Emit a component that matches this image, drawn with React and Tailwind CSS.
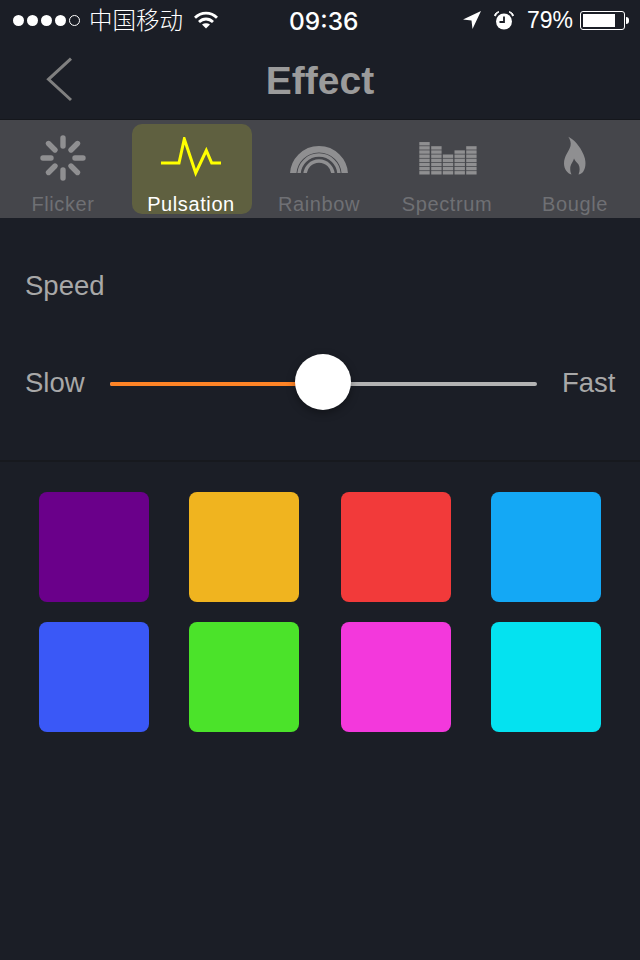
const TABS = ["Flicker", "Pulsation", "Rainbow", "Spectrum", "Bougle"];

const SWATCHES = [
  "bg-[#6a008a]",
  "bg-[#f0b41f]",
  "bg-[#f23a3a]",
  "bg-[#14a8f5]",
  "bg-[#3a58f7]",
  "bg-[#4be32a]",
  "bg-[#f338dc]",
  "bg-[#04e2f0]",
];

const SPECTRUM = [
  { x: 2.3, bars: 8 },
  { x: 14.2, bars: 7 },
  { x: 25.8, bars: 5 },
  { x: 37.5, bars: 6 },
  { x: 49.2, bars: 7 },
];

function SignalDots() {
  return (
    <div className="flex items-center gap-[3px]">
      {[0, 1, 2, 3].map((i) => (
        <div key={i} className="w-[11px] h-[11px] rounded-full bg-white" />
      ))}
      <div className="w-[11px] h-[11px] rounded-full border border-white" />
    </div>
  );
}

function Wifi() {
  return (
    <svg width="24" height="18" viewBox="0 0 24 18" fill="none" stroke="white" strokeWidth="2.8">
      <path d="M1 6.8C7.2 0.6 16.8 0.6 23 6.8" />
      <path d="M5 11C9.2 7 14.8 7 19 11" />
      <path d="M12 17.5L8 13.6C10.4 11.9 13.6 11.9 16 13.6Z" fill="white" stroke="none" />
    </svg>
  );
}

function StatusBar() {
  return (
    <div className="relative h-10 flex items-center justify-between pl-[13px] pr-[11px] text-white">
      <div className="flex items-center">
        <SignalDots />
        <span className="ml-[9px] text-[23.5px] font-light font-['Noto_Sans_CJK_SC',sans-serif]">中国移动</span>
        <div className="ml-[11px]">
          <Wifi />
        </div>
      </div>
      <span className="absolute left-[289px] top-[5px] text-[24.5px] leading-[32px] font-medium font-['Inter',sans-serif]">09:36</span>
      <div className="flex items-center">
        <svg width="18" height="18" viewBox="0 0 18 18" fill="white">
          <path d="M0 8.5L18 0L9.5 18L8.5 9.5Z" />
        </svg>
        <svg className="ml-[13px]" width="20" height="19" viewBox="0 0 20 19">
          <circle cx="10" cy="10.5" r="8" fill="white" />
          <path d="M10 5.5V11H5.5" fill="none" stroke="#1b1e26" strokeWidth="1.8" />
          <path d="M0.5 4.5C1 2.5 3 0.8 5 0.8C3.5 1.8 2 3.2 1.5 5ZM19.5 4.5C19 2.5 17 0.8 15 0.8C16.5 1.8 18 3.2 18.5 5Z" fill="white" stroke="white" strokeWidth="1" />
        </svg>
        <span className="ml-[13px] text-[23px] leading-none font-light">79%</span>
        <div className="ml-[7px] flex items-center">
          <div className="w-[45px] h-[19px] rounded-[3px] border border-white p-[2px]">
            <div className="w-[32px] h-full bg-white" />
          </div>
          <div className="ml-[1px] w-[3px] h-[7px] rounded-r-sm bg-white" />
        </div>
      </div>
    </div>
  );
}

function TabIcon({ name }) {
  if (name === "Flicker") {
    return (
      <svg width="46" height="46" viewBox="0 0 46 46" stroke="#8f8f91" strokeWidth="5.4" strokeLinecap="round">
        <path d="M23 3V11M23 35V43M3 23H11M35 23H43M8.5 8.5L15 15M31 31L37.5 37.5M37.5 8.5L31 15M15 31L8.5 37.5" />
      </svg>
    );
  }
  if (name === "Pulsation") {
    return (
      <svg className="-translate-y-px" width="62" height="40" viewBox="0 0 62 40" fill="none" stroke="#ffff00" strokeWidth="3">
        <path d="M1 26H19L24.3 2L35.7 36L46.3 13.5L51.7 26H61" />
      </svg>
    );
  }
  if (name === "Rainbow") {
    return (
      <svg className="translate-y-[2px]" width="58" height="27" viewBox="0 0 58 27" fill="none" stroke="#8f8f91">
        <circle cx="29" cy="29" r="25.8" strokeWidth="6.4" />
        <circle cx="29" cy="29" r="20" strokeWidth="3.4" />
        <circle cx="29" cy="29" r="14" strokeWidth="3.4" />
      </svg>
    );
  }
  if (name === "Spectrum") {
    return (
      <svg width="60" height="34" viewBox="0 0 60 34" fill="#8f8f91">
        {SPECTRUM.flatMap((col) =>
          Array.from({ length: col.bars }, (_, i) => (
            <rect key={`${col.x}-${i}`} x={col.x} y={33.5 - 3.4 - i * 4.15} width="10.4" height="3.4" />
          ))
        )}
      </svg>
    );
  }
  return (
    <svg className="-translate-y-[2px]" width="24" height="40" viewBox="0 0 24 40" fill="#8f8f91">
      <path d="M5.3 0.7C11 3.5 17 10 20.5 18.5C23 24 23.5 31 20 36C18.5 37.5 17 38.3 15.5 38.5C17 35 17 31 15.5 28.5C14 26.5 12 25 11 22.5C10.5 25.5 8 27.5 7.3 31C7 34 7.5 36.5 8.5 38.5C4.5 37.5 1 33 1 27.5C1 20 6 15.5 7.5 10C8.3 6.5 7 3 5.3 0.7Z" />
    </svg>
  );
}

export default function App() {
  return (
    <div className="w-[640px] h-[960px] overflow-hidden bg-[#1b1e26] font-['Liberation_Sans',sans-serif]">
      <StatusBar />

      {/* Header */}
      <div className="relative h-[80px] flex items-center justify-center border-b border-[#15171c]">
        <svg className="absolute left-[46px] top-[16px]" width="28" height="46" viewBox="0 0 28 46" fill="none" stroke="#808080" strokeWidth="3">
          <path d="M25 2.7L2.5 23.3L25 44" />
        </svg>
        <h1 className="pt-[3px] text-[39px] font-bold text-[#9b9b9b]">Effect</h1>
      </div>

      {/* Effect tabs */}
      <div className="h-[98px] bg-[#45464b] flex ml-[-1px]">
        {TABS.map((tab) => {
          const active = tab === "Pulsation";
          return (
            <div key={tab} className="relative w-[128px] shrink-0 flex flex-col items-center">
              {active && <div className="absolute left-[5px] top-[4px] w-[120px] h-[90px] rounded-[10px] bg-[#5f6040]" />}
              <div className="relative h-[70px] pt-[5px] flex items-center justify-center">
                <TabIcon name={tab} />
              </div>
              <span className={`relative text-[20px] leading-[28px] tracking-[0.6px] ${active ? "text-white" : "text-[#6f7074]"}`}>
                {tab}
              </span>
            </div>
          );
        })}
      </div>

      {/* Speed */}
      <div className="h-[244px] border-b-2 border-[#17191e] px-[25px] text-[#a8a8a8] text-[27.5px]">
        <div className="pt-[50px] leading-[36px]">Speed</div>
        <div className="mt-[61px] flex items-center leading-[36px]">
          <span className="w-[85px] shrink-0 pb-[2px]">Slow</span>
          <div className="relative w-[427px] h-[4px] shrink-0 rounded-full bg-[#b3b3b3]">
            <div className="w-[200px] h-full rounded-full bg-[#ff8426]" />
            <div className="absolute left-[185px] top-[-28px] w-[56px] h-[56px] rounded-full bg-white shadow-[0_3px_8px_rgba(0,0,0,0.35)]" />
          </div>
          <span className="ml-[25px] pb-[2px]">Fast</span>
        </div>
      </div>

      {/* Colours */}
      <div className="ml-[39px] mt-[30px] grid grid-cols-[150px_152px_150px_110px] gap-y-[20px]">
        {SWATCHES.map((color) => (
          <div key={color} className={`w-[110px] h-[110px] rounded-[8px] ${color}`} />
        ))}
      </div>
    </div>
  );
}
